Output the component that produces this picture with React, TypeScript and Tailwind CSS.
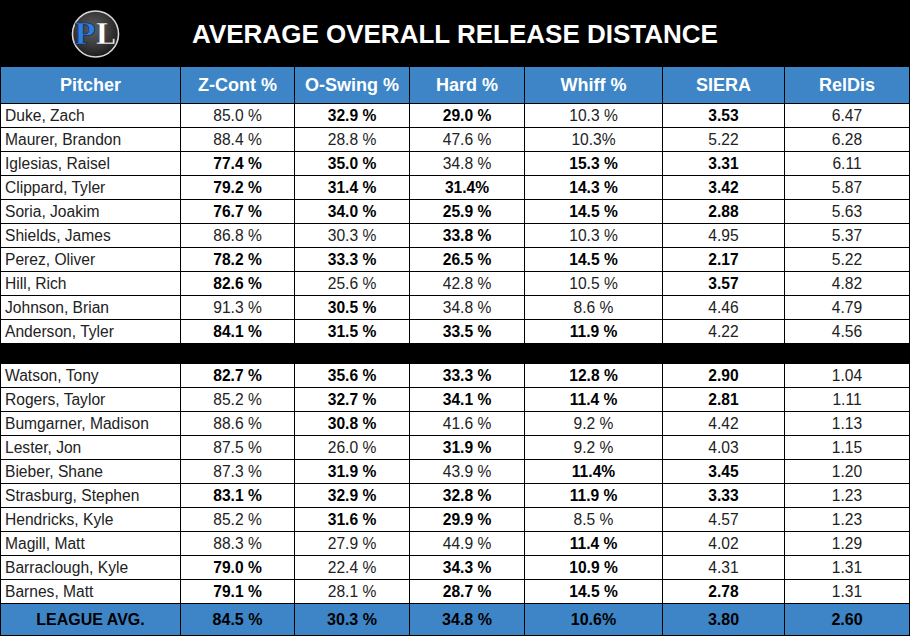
import React from "react";

type Cell = [string, boolean];

const cols = ["Pitcher", "Z-Cont %", "O-Swing %", "Hard %", "Whiff %", "SIERA", "RelDis"];

const grid = "grid grid-cols-[180px_114px_115px_115px_138px_122px_125px]";

// "*" prefix marks a bold value
const top: string[][] = [
  ["Duke, Zach", "85.0 %", "*32.9 %", "*29.0 %", "10.3 %", "*3.53", "6.47"],
  ["Maurer, Brandon", "88.4 %", "28.8 %", "47.6 %", "10.3%", "5.22", "6.28"],
  ["Iglesias, Raisel", "*77.4 %", "*35.0 %", "34.8 %", "*15.3 %", "*3.31", "6.11"],
  ["Clippard, Tyler", "*79.2 %", "*31.4 %", "*31.4%", "*14.3 %", "*3.42", "5.87"],
  ["Soria, Joakim", "*76.7 %", "*34.0 %", "*25.9 %", "*14.5 %", "*2.88", "5.63"],
  ["Shields, James", "86.8 %", "30.3 %", "*33.8 %", "10.3 %", "4.95", "5.37"],
  ["Perez, Oliver", "*78.2 %", "*33.3 %", "*26.5 %", "*14.5 %", "*2.17", "5.22"],
  ["Hill, Rich", "*82.6 %", "25.6 %", "42.8 %", "10.5 %", "*3.57", "4.82"],
  ["Johnson, Brian", "91.3 %", "*30.5 %", "34.8 %", "8.6 %", "4.46", "4.79"],
  ["Anderson, Tyler", "*84.1 %", "*31.5 %", "*33.5 %", "*11.9 %", "4.22", "4.56"],
];

const bottom: string[][] = [
  ["Watson, Tony", "*82.7 %", "*35.6 %", "*33.3 %", "*12.8 %", "*2.90", "1.04"],
  ["Rogers, Taylor", "85.2 %", "*32.7 %", "*34.1 %", "*11.4 %", "*2.81", "1.11"],
  ["Bumgarner, Madison", "88.6 %", "*30.8 %", "41.6 %", "9.2 %", "4.42", "1.13"],
  ["Lester, Jon", "87.5 %", "26.0 %", "*31.9 %", "9.2 %", "4.03", "1.15"],
  ["Bieber, Shane", "87.3 %", "*31.9 %", "43.9 %", "*11.4%", "*3.45", "1.20"],
  ["Strasburg, Stephen", "*83.1 %", "*32.9 %", "*32.8 %", "*11.9 %", "*3.33", "1.23"],
  ["Hendricks, Kyle", "85.2 %", "*31.6 %", "*29.9 %", "8.5 %", "4.57", "1.23"],
  ["Magill, Matt", "88.3 %", "27.9 %", "44.9 %", "*11.4 %", "4.02", "1.29"],
  ["Barraclough, Kyle", "*79.0 %", "22.4 %", "*34.3 %", "*10.9 %", "4.31", "1.31"],
  ["Barnes, Matt", "*79.1 %", "28.1 %", "*28.7 %", "*14.5 %", "*2.78", "1.31"],
];

const league = ["LEAGUE AVG.", "84.5 %", "30.3 %", "34.8 %", "10.6%", "3.80", "2.60"];

const parse = (v: string): Cell => (v.startsWith("*") ? [v.slice(1), true] : [v, false]);

const Logo = () => (
  <svg width="50" height="50" viewBox="0 0 50 50">
    <defs>
      <radialGradient id="lg" cx="45%" cy="40%" r="60%">
        <stop offset="0%" stopColor="#5e5e5e" />
        <stop offset="60%" stopColor="#3a3a3a" />
        <stop offset="100%" stopColor="#1c1c1c" />
      </radialGradient>
    </defs>
    <circle cx="25" cy="25" r="23.5" fill="url(#lg)" stroke="#d8d8d8" strokeWidth="1.6" />
    <text
      x="3"
      y="35.5"
      fontFamily="'DejaVu Serif', serif"
      fontWeight="bold"
      fontSize="29"
      fill="#2f7de1"
      stroke="#0d2a55"
      strokeWidth="0.7"
    >
      P
    </text>
    <text
      x="24.8"
      y="35.5"
      fontFamily="'DejaVu Serif', serif"
      fontWeight="bold"
      fontSize="29"
      fill="#ffffff"
      stroke="#333"
      strokeWidth="0.5"
    >
      L
    </text>
  </svg>
);

const Row = ({ row }: { row: string[] }) => (
  <div className={`${grid} h-[24px] border-b border-black bg-white`}>
    {row.map((raw, i) => {
      const [v, b] = parse(raw);
      return (
        <div
          key={i}
          className={`flex items-center border-r border-black text-[15.6px] leading-none ${
            i === 0 ? "pl-[4px]" : "justify-center"
          } ${b ? "font-bold text-black" : "text-[#222]"}`}
        >
          {v}
        </div>
      );
    })}
  </div>
);

export default function App() {
  return (
    <div className="w-[912px] h-[639px] bg-white font-['Liberation_Sans',Arial,sans-serif]">
      <div className="w-[910px]">
        <div className="h-[67px] bg-black flex items-center">
          <div className="w-[120px] pl-[71px] flex items-center">
            <Logo />
          </div>
          <div className="flex-1 pr-[120px] text-center text-white font-bold text-[26px] leading-none">
            AVERAGE OVERALL RELEASE DISTANCE
          </div>
        </div>
        <div className="border-l border-black">
          <div className={`${grid} h-[37px] border-b border-black bg-[#3d85c6]`}>
            {cols.map((c) => (
              <div
                key={c}
                className="flex items-center justify-center border-r border-black text-white font-bold text-[18px] leading-none"
              >
                {c}
              </div>
            ))}
          </div>
          {top.map((r) => (
            <Row key={r[0]} row={r} />
          ))}
          <div className="h-[20px] bg-black" />
          {bottom.map((r) => (
            <Row key={r[0]} row={r} />
          ))}
          <div className={`${grid} h-[32px] border-b border-black bg-[#3d85c6]`}>
            {league.map((c, i) => (
              <div
                key={i}
                className="flex items-center justify-center border-r border-black text-black font-bold text-[16px] leading-none"
              >
                {c}
              </div>
            ))}
          </div>
        </div>
      </div>
    </div>
  );
}
